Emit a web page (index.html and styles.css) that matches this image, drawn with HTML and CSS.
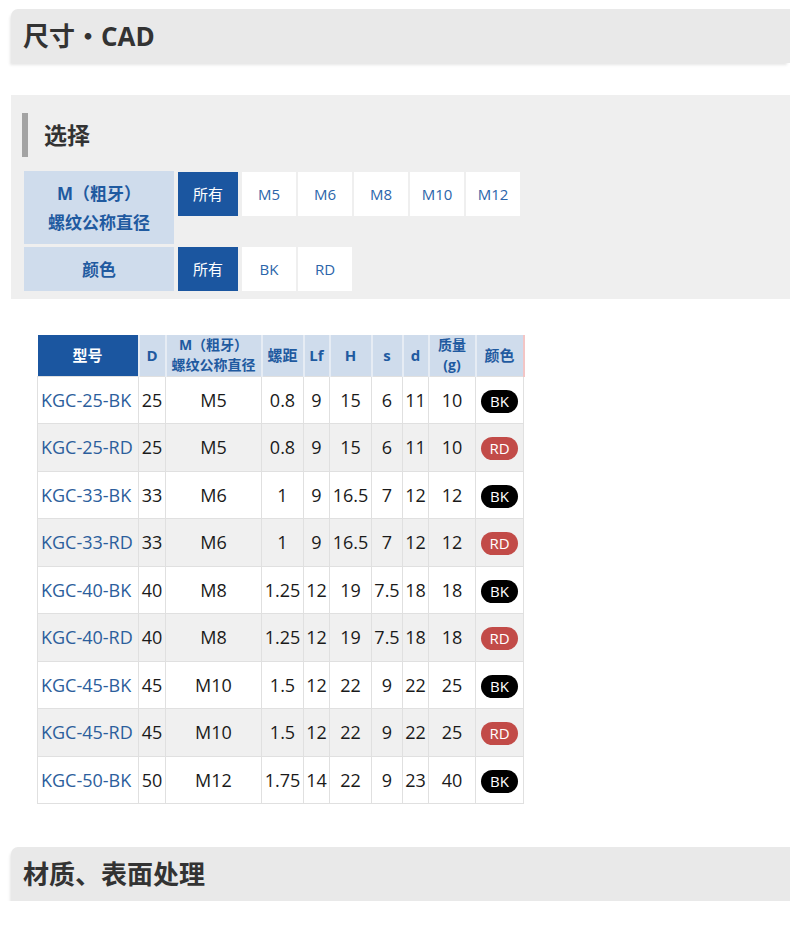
FILE: index.html
```html
<!DOCTYPE html>
<html lang="zh-CN">
<head>
<meta charset="utf-8">
<title>尺寸・CAD</title>
<link rel="stylesheet" href="styles.css">
</head>
<body>
<div class="page">
  <h2 class="section-title">尺寸・CAD</h2>

  <div class="select-panel">
    <h3 class="select-heading">选择</h3>
    <div class="filter-row filter-row-tall">
      <div class="filter-label">M（粗牙）<br>螺纹公称直径</div>
      <div class="filter-options">
        <span class="opt opt-all active">所有</span>
        <span class="opt">M5</span>
        <span class="opt">M6</span>
        <span class="opt">M8</span>
        <span class="opt">M10</span>
        <span class="opt">M12</span>
      </div>
    </div>
    <div class="filter-row">
      <div class="filter-label">颜色</div>
      <div class="filter-options">
        <span class="opt opt-all active">所有</span>
        <span class="opt">BK</span>
        <span class="opt">RD</span>
      </div>
    </div>
  </div>

  <table class="spec">
    <colgroup>
      <col class="c-model"><col class="c-d"><col class="c-m"><col class="c-pitch"><col class="c-lf"><col class="c-h"><col class="c-s"><col class="c-dd"><col class="c-mass"><col class="c-color">
    </colgroup>
    <thead>
      <tr>
        <th class="th-model">型号</th>
        <th>D</th>
        <th class="th-two"><span class="th-line">M（粗牙）</span><span class="th-line">螺纹公称直径</span></th>
        <th>螺距</th>
        <th>Lf</th>
        <th>H</th>
        <th>s</th>
        <th>d</th>
        <th class="th-two"><span class="th-line">质量</span><span class="th-line">(g)</span></th>
        <th class="th-color">颜色</th>
      </tr>
    </thead>
    <tbody>
      <tr><td class="model">KGC-25-BK</td><td>25</td><td>M5</td><td>0.8</td><td>9</td><td>15</td><td>6</td><td>11</td><td>10</td><td><span class="badge bk">BK</span></td></tr>
      <tr><td class="model">KGC-25-RD</td><td>25</td><td>M5</td><td>0.8</td><td>9</td><td>15</td><td>6</td><td>11</td><td>10</td><td><span class="badge rd">RD</span></td></tr>
      <tr><td class="model">KGC-33-BK</td><td>33</td><td>M6</td><td>1</td><td>9</td><td>16.5</td><td>7</td><td>12</td><td>12</td><td><span class="badge bk">BK</span></td></tr>
      <tr><td class="model">KGC-33-RD</td><td>33</td><td>M6</td><td>1</td><td>9</td><td>16.5</td><td>7</td><td>12</td><td>12</td><td><span class="badge rd">RD</span></td></tr>
      <tr><td class="model">KGC-40-BK</td><td>40</td><td>M8</td><td>1.25</td><td>12</td><td>19</td><td>7.5</td><td>18</td><td>18</td><td><span class="badge bk">BK</span></td></tr>
      <tr><td class="model">KGC-40-RD</td><td>40</td><td>M8</td><td>1.25</td><td>12</td><td>19</td><td>7.5</td><td>18</td><td>18</td><td><span class="badge rd">RD</span></td></tr>
      <tr><td class="model">KGC-45-BK</td><td>45</td><td>M10</td><td>1.5</td><td>12</td><td>22</td><td>9</td><td>22</td><td>25</td><td><span class="badge bk">BK</span></td></tr>
      <tr><td class="model">KGC-45-RD</td><td>45</td><td>M10</td><td>1.5</td><td>12</td><td>22</td><td>9</td><td>22</td><td>25</td><td><span class="badge rd">RD</span></td></tr>
      <tr><td class="model">KGC-50-BK</td><td>50</td><td>M12</td><td>1.75</td><td>14</td><td>22</td><td>9</td><td>23</td><td>40</td><td><span class="badge bk">BK</span></td></tr>
    </tbody>
  </table>

  <h2 class="section-title section-title-bottom">材质、表面处理</h2>
</div>
</body>
</html>
```

FILE: styles.css
```css
html, body {
  margin: 0;
  padding: 0;
  background: #ffffff;
}

body {
  font-family: "Open Sans", "Noto Sans CJK SC", sans-serif;
  color: #222;
  overflow: hidden;
}

.page {
  padding: 9px 0 0 11px;
}

.section-title {
  margin: 0;
  height: 54px;
  line-height: 54px;
  padding-left: 12px;
  background: #e9e9e9;
  border-top-left-radius: 7px;
  box-shadow: -2px 3px 3px -1px rgba(0, 0, 0, 0.10);
  font-size: 26px;
  font-weight: 700;
  color: #333;
}

.section-title-bottom {
  margin-top: 43px;
}

.select-panel {
  margin-top: 32px;
  background: #efefef;
  padding: 18px 0 8px 11px;
}

.select-heading {
  margin: 0;
  height: 44px;
  line-height: 44px;
  border-left: 6px solid #a3a3a3;
  padding-left: 16px;
  font-size: 23px;
  font-weight: 700;
  color: #333;
}

.filter-row {
  display: flex;
  margin-left: 2px;
  margin-top: 3px;
}

.filter-row-tall {
  margin-top: 14px;
}

.filter-label {
  width: 150px;
  flex: none;
  background: #cfdcec;
  color: #1f5aa0;
  font-weight: 700;
  font-size: 17px;
  line-height: 29px;
  text-align: center;
  display: flex;
  align-items: center;
  justify-content: center;
  min-height: 44px;
}

.filter-row-tall .filter-label {
  height: 73px;
  padding-top: 1px;
  box-sizing: border-box;
}

.filter-options {
  display: flex;
  align-items: flex-start;
  gap: 2px;
  margin-left: 4px;
  padding-top: 1px;
}

.filter-row:not(.filter-row-tall) .filter-options {
  padding-top: 0;
}

.opt {
  width: 54px;
  height: 44px;
  line-height: 44px;
  text-align: center;
  background: #ffffff;
  color: #2b65aa;
  font-size: 15px;
}

.opt-all {
  width: 60px;
  margin-right: 2px;
}

.opt.active {
  background: #1b56a0;
  color: #ffffff;
}

.spec {
  margin-top: 36px;
  margin-left: 26px;
  border-collapse: collapse;
  table-layout: fixed;
  width: 486px;
}

.c-model { width: 101px; }
.c-d { width: 27px; }
.c-m { width: 96px; }
.c-pitch { width: 42px; }
.c-lf { width: 26px; }
.c-h { width: 42px; }
.c-s { width: 31px; }
.c-dd { width: 26px; }
.c-mass { width: 47px; }
.c-color { width: 48px; }

.spec th {
  height: 41px;
  padding: 0;
  background: #cfdcec;
  color: #1f5aa0;
  font-size: 15px;
  font-weight: 700;
  line-height: 18px;
  text-align: center;
  border-left: 2px solid #e6ecf4;
  box-sizing: border-box;
  white-space: nowrap;
}

.spec th.th-two {
  font-size: 14px;
}

.th-line {
  display: block;
  height: 20px;
  line-height: 20px;
}

.spec th.th-model {
  background: #1b56a0;
  color: #ffffff;
  border-left: none;
}

.spec th.th-color {
  border-right: 2px solid #f3c5c5;
}

.spec td {
  height: 47.5px;
  padding: 0;
  font-size: 18px;
  text-align: center;
  color: #1a1a1a;
  border: 1px solid #e0e0e0;
  box-sizing: border-box;
  white-space: nowrap;
}

.spec tbody tr:nth-child(even) td {
  background: #f0f0f0;
}

.spec td.model {
  text-align: left;
  padding-left: 3px;
  color: #2c5e9c;
}

.badge {
  display: inline-block;
  width: 37px;
  height: 23px;
  line-height: 23px;
  border-radius: 12px;
  font-size: 15px;
  color: #ffffff;
  text-align: center;
  vertical-align: middle;
}

.badge.bk {
  background: #000000;
}

.badge.rd {
  background: #c24b48;
}
```
